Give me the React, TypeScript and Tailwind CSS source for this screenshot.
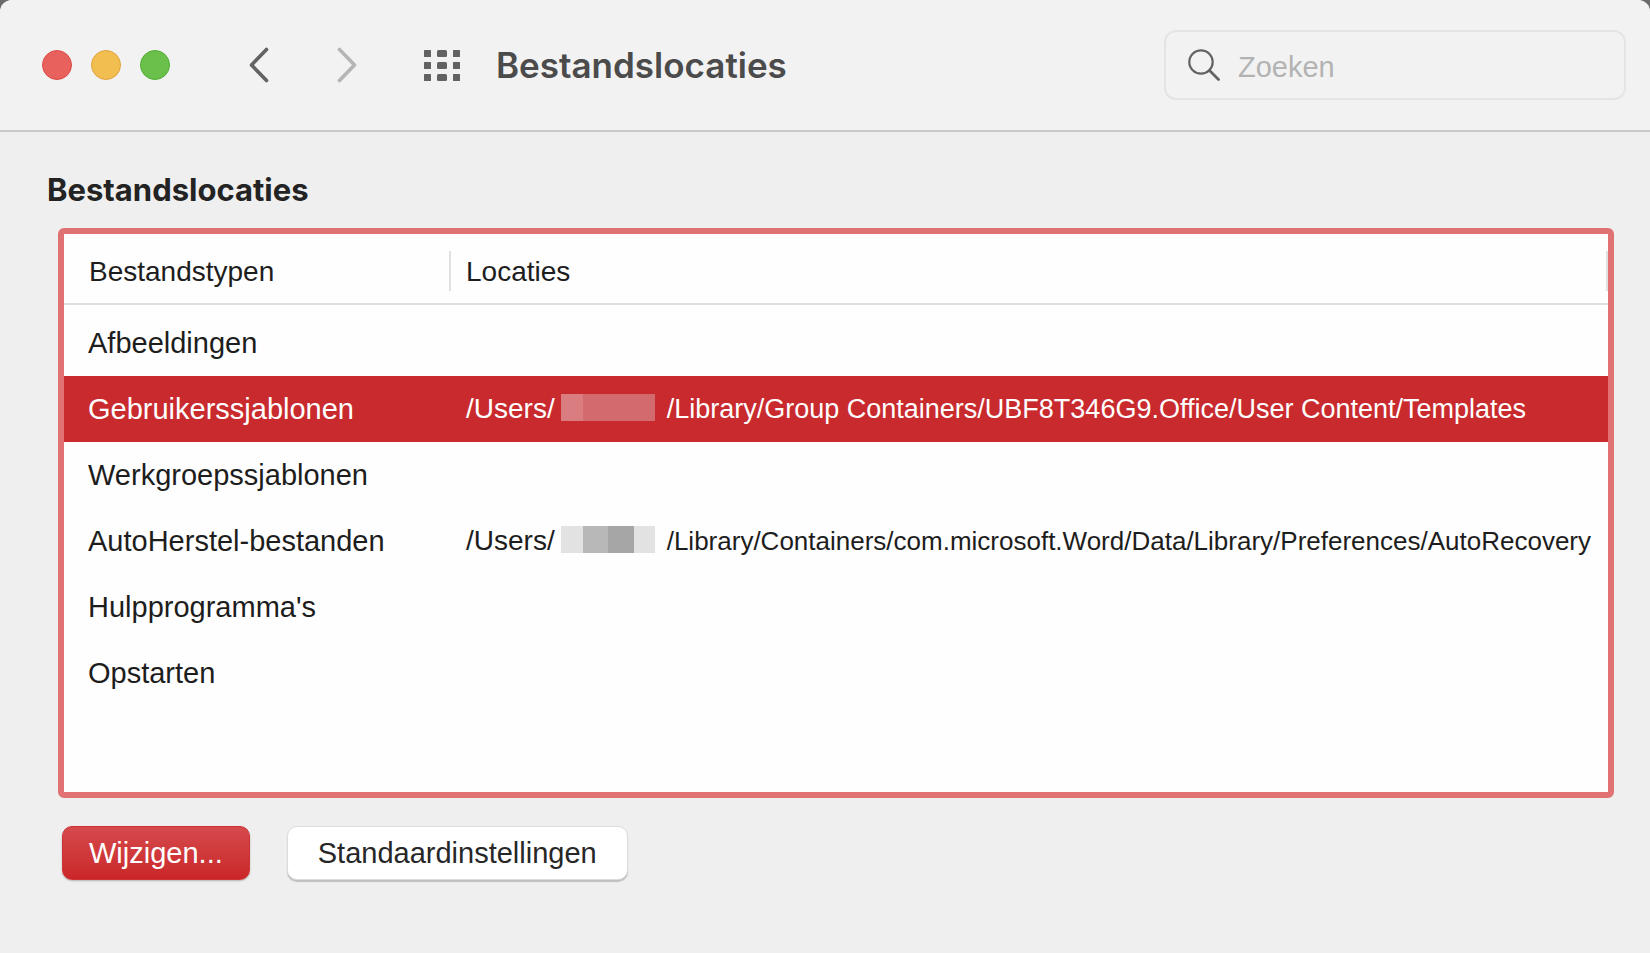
import type { ReactNode } from "react";

type FileLocation = {
  type: string;
  path?: string;
  selected?: boolean;
};

const locations: FileLocation[] = [
  { type: "Afbeeldingen" },
  {
    type: "Gebruikerssjablonen",
    path: "/Library/Group Containers/UBF8T346G9.Office/User Content/Templates",
    selected: true,
  },
  { type: "Werkgroepssjablonen" },
  {
    type: "AutoHerstel-bestanden",
    path: "/Library/Containers/com.microsoft.Word/Data/Library/Preferences/AutoRecovery",
  },
  { type: "Hulpprogramma's" },
  { type: "Opstarten" },
];

function WindowButtons() {
  return (
    <div className="flex gap-[19px]">
      <button
        aria-label="Sluiten"
        className="size-[30px] rounded-full border border-[#dc4a48] bg-[#e8615d]"
      />
      <button
        aria-label="Minimaliseren"
        className="size-[30px] rounded-full border border-[#dfa23c] bg-[#f2be50]"
      />
      <button
        aria-label="Vergroten"
        className="size-[30px] rounded-full border border-[#4fae34] bg-[#6bc04b]"
      />
    </div>
  );
}

function Chevron({ d }: { d: string }) {
  return (
    <svg
      viewBox="0 0 20 36"
      className="h-9 w-5"
      fill="none"
      stroke="currentColor"
      strokeWidth="3.6"
      strokeLinecap="round"
      strokeLinejoin="round"
    >
      <path d={d} />
    </svg>
  );
}

function GridIcon() {
  const rows = [0, 12, 24];
  return (
    <svg viewBox="0 0 36 31" className="h-[31px] w-9" fill="currentColor">
      {rows.map((y) => (
        <g key={y}>
          <rect x="0" y={y} width="7" height="7" rx="0.5" />
          <rect x="13" y={y} width="10" height="7" rx="1.5" />
          <rect x="29" y={y} width="7" height="7" rx="0.5" />
        </g>
      ))}
    </svg>
  );
}

function SearchField() {
  return (
    <label className="flex h-[70px] w-[462px] items-center gap-[18px] rounded-xl border-2 border-[#e4e4e4] pl-[22px] pr-4">
      <svg
        viewBox="0 0 32 32"
        className="size-8 shrink-0 text-[#636363]"
        fill="none"
        stroke="currentColor"
        strokeLinecap="round"
      >
        <circle cx="13" cy="13" r="11.7" strokeWidth="2.2" />
        <path d="M21.5 21.5 30.5 30.5" strokeWidth="2.8" />
      </svg>
      <input
        type="search"
        aria-label="Zoeken"
        placeholder="Zoeken"
        className="w-full min-w-0 bg-transparent pt-1 text-[29px] leading-9 text-[#333] outline-none placeholder:text-[#b3b3b3]"
      />
    </label>
  );
}

// Pixelated block that hides the user name
function Redacted({ selected }: { selected?: boolean }) {
  return (
    <span className="mr-3 mb-1 ml-1.5 flex h-[27px] w-[94px] shrink-0">
      {selected ? (
        <>
          <span className="w-[22px] bg-[#d97d80]" />
          <span className="flex-1 bg-[#d36b6e]" />
        </>
      ) : (
        <>
          <span className="w-[22px] bg-[#e2e2e2]" />
          <span className="w-[25px] bg-[#b8b8b8]" />
          <span className="w-[26px] bg-[#a6a6a6]" />
          <span className="flex-1 bg-[#e2e2e2]" />
        </>
      )}
    </span>
  );
}

function HeaderCell({ children, className }: { children: ReactNode; className: string }) {
  return (
    <th
      scope="col"
      className="h-[71px] border-b-2 border-[#dedede] p-0 pt-1 text-left font-normal"
    >
      <div className={`flex h-10 items-center border-r-2 border-[#e0e0e0] pt-0.5 ${className}`}>
        {children}
      </div>
    </th>
  );
}

function LocationsTable() {
  return (
    <div className="ml-[11px] rounded-md border-6 border-[#e07274] bg-[#e07274]">
      <div className="bg-[#fefefe] pb-[86px]">
        <table className="w-full table-fixed border-separate border-spacing-0 text-[28px] leading-8 text-[#1d1d1d]">
          <colgroup>
            <col className="w-[387px]" />
            <col />
          </colgroup>
          <thead>
            <tr>
              <HeaderCell className="pl-[25px]">Bestandstypen</HeaderCell>
              <HeaderCell className="pl-[15px]">Locaties</HeaderCell>
            </tr>
          </thead>
          <tbody className="before:block before:h-[5px] before:content-['']">
            {locations.map(({ type, path, selected }) => (
              <tr key={type} className={selected ? "bg-[#c92a2d] text-white" : ""}>
                <td className="h-[66px] p-0 pl-6 text-[29px]">{type}</td>
                <td className="h-[66px] p-0 pl-[15px] whitespace-nowrap">
                  {path && (
                    <div className="flex items-center">
                      <span>/Users/</span>
                      <Redacted selected={selected} />
                      {/* Long paths get a smaller size so they stay inside the column */}
                      <span className={path.length > 70 ? "text-[26px]" : "text-[27px]"}>
                        {path}
                      </span>
                    </div>
                  )}
                </td>
              </tr>
            ))}
          </tbody>
        </table>
      </div>
    </div>
  );
}

export default function App() {
  return (
    <div className="min-h-screen bg-[#6b6b6b] font-['Liberation_Sans',Arial,sans-serif]">
      <div className="min-h-screen overflow-hidden rounded-t-xl bg-[#efefef]">
        {/* Toolbar */}
        <header className="flex h-[132px] items-center border-b-2 border-[#c9c9c9] bg-[#f2f2f2] pr-6 pl-[42px]">
          <WindowButtons />
          <button aria-label="Vorige" className="ml-[79px] text-[#636363]">
            <Chevron d="M17.5 2.5 2.5 18 17.5 33.5" />
          </button>
          <button aria-label="Volgende" className="ml-[68px] text-[#b5b5b5]">
            <Chevron d="M2.5 2.5 17.5 18 2.5 33.5" />
          </button>
          <button aria-label="Toon alles" className="ml-[67px] text-[#626262]">
            <GridIcon />
          </button>
          <h1 className="ml-9 font-['Inter',sans-serif] text-[35px] font-semibold text-[#4b4b4b]">
            Bestandslocaties
          </h1>
          <div className="ml-auto">
            <SearchField />
          </div>
        </header>

        <main className="pt-[37px] pr-9 pl-[47px]">
          <h2 className="mb-[17px] font-['Inter',sans-serif] text-[31px] leading-[42px] font-bold text-[#232323]">
            Bestandslocaties
          </h2>
          <LocationsTable />
          <div className="mt-7 ml-[15px] flex gap-[37px] text-[29px] leading-8">
            <button className="h-[54px] rounded-[10px] border border-[#cf3235] bg-linear-to-b from-[#d5494c] to-[#cb2528] px-[26px] text-white shadow-[0_1px_2px_rgba(0,0,0,0.25)]">
              Wijzigen...
            </button>
            <button className="h-[54px] rounded-[10px] border border-[#dcdcdc] bg-white px-[30px] text-[#272727] shadow-[0_2px_1px_rgba(0,0,0,0.2)]">
              Standaardinstellingen
            </button>
          </div>
        </main>
      </div>
    </div>
  );
}
